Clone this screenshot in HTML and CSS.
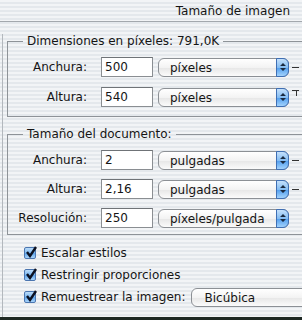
FILE: index.html
```html
<!DOCTYPE html>
<html lang="es">
<head>
  <meta charset="UTF-8">
  <title>Tamaño de imagen</title>
  <link rel="stylesheet" href="styles.css">
</head>
<body>

  <div class="window">
    <div class="titlebar">Tamaño de imagen</div>

    <div class="content">
      <fieldset class="group first">
        <legend>Dimensiones en píxeles: 791,0K</legend>
        <div class="row">
          <label>Anchura:</label>
          <div class="field">500</div>
          <div class="select">píxeles<span class="stepper"><svg width="6" height="10" viewBox="0 0 6 10"><path d="M0 4 L3 1 L6 4 Z M0 6 L3 9 L6 6 Z" fill="#1a2a40"/></svg></span></div>
          <span class="link"></span>
        </div>
        <div class="row">
          <label>Altura:</label>
          <div class="field">540</div>
          <div class="select">píxeles<span class="stepper"><svg width="6" height="10" viewBox="0 0 6 10"><path d="M0 4 L3 1 L6 4 Z M0 6 L3 9 L6 6 Z" fill="#1a2a40"/></svg></span></div>
          <span class="link tee"></span>
        </div>
      </fieldset>

      <fieldset class="group second">
        <legend>Tamaño del documento:</legend>
        <div class="row">
          <label>Anchura:</label>
          <div class="field">2</div>
          <div class="select">pulgadas<span class="stepper"><svg width="6" height="10" viewBox="0 0 6 10"><path d="M0 4 L3 1 L6 4 Z M0 6 L3 9 L6 6 Z" fill="#1a2a40"/></svg></span></div>
          <span class="link"></span>
        </div>
        <div class="row">
          <label>Altura:</label>
          <div class="field">2,16</div>
          <div class="select">pulgadas<span class="stepper"><svg width="6" height="10" viewBox="0 0 6 10"><path d="M0 4 L3 1 L6 4 Z M0 6 L3 9 L6 6 Z" fill="#1a2a40"/></svg></span></div>
          <span class="link"></span>
        </div>
        <div class="row">
          <label>Resolución:</label>
          <div class="field">250</div>
          <div class="select">píxeles/pulgada<span class="stepper"><svg width="6" height="10" viewBox="0 0 6 10"><path d="M0 4 L3 1 L6 4 Z M0 6 L3 9 L6 6 Z" fill="#1a2a40"/></svg></span></div>
        </div>
      </fieldset>

      <div class="checks">
        <div class="check"><span class="box"><svg width="12" height="12" viewBox="0 0 12 12"><path d="M2 6 L5 10 L11 1" stroke="#0b1020" stroke-width="2.4" fill="none"/></svg></span><span>Escalar estilos</span></div>
        <div class="check"><span class="box"><svg width="12" height="12" viewBox="0 0 12 12"><path d="M2 6 L5 10 L11 1" stroke="#0b1020" stroke-width="2.4" fill="none"/></svg></span><span>Restringir proporciones</span></div>
        <div class="check"><span class="box"><svg width="12" height="12" viewBox="0 0 12 12"><path d="M2 6 L5 10 L11 1" stroke="#0b1020" stroke-width="2.4" fill="none"/></svg></span><span>Remuestrear la imagen:</span>
          <div class="select wide">Bicúbica</div>
        </div>
      </div>
    </div>
  </div>

</body>
</html>
```

FILE: styles.css
```css
body {
  margin: 0;
  background-color: #1d2823;
  font-family: "DejaVu Sans", sans-serif;
  font-size: 12px;
  color: #151515;
}

.window {
  width: 302px;
  height: 317px;
  overflow: hidden;
  background: repeating-linear-gradient(to bottom, #f2f4f6 0 2px, #e4e8ec 2px 4px);
}

.titlebar {
  height: 21px;
  line-height: 22px;
  text-align: right;
  padding-right: 12px;
  border-bottom: 1px solid #a3a8ad;
}

.content {
  margin-left: 2px;
  border-left: 1px solid #b3b8bd;
  height: 300px;
}

.group {
  margin: 0 -20px 0 4px;
  padding: 9px 0 9px 0;
  border: 1px solid #8e9398;
  min-width: 0;
}

.group.first {
  margin-top: 12px;
}

.group.second {
  margin-top: 10px;
  padding-bottom: 6px;
}

.group legend {
  margin-left: 15px;
  padding: 0 4px;
  line-height: 14px;
}

.row {
  display: flex;
  align-items: center;
  height: 20px;
  margin-bottom: 9px;
}

.first .row {
  margin-bottom: 10px;
}

.row:last-child {
  margin-bottom: 0;
}

.row label {
  width: 79px;
  text-align: right;
  margin-right: 14px;
}

.field {
  width: 47px;
  height: 18px;
  line-height: 19px;
  padding-left: 3px;
  background: #fff;
  border: 1px solid #8a8e92;
  border-top-color: #6f7377;
  margin-right: 5px;
}

.select {
  position: relative;
  flex-shrink: 0;
  width: 118px;
  height: 17px;
  line-height: 18px;
  padding-left: 11px;
  border: 1px solid #8c9095;
  border-radius: 6px;
  text-align: left;
  background: linear-gradient(to bottom, #ffffff 0%, #f3f3f3 50%, #e6e6e6 51%, #fbfbfb 100%);
}

.stepper {
  position: absolute;
  top: -1px;
  right: -1px;
  width: 13px;
  height: 19px;
  border-radius: 0 6px 6px 0;
  border: 1px solid #3f6fb4;
  box-sizing: border-box;
  background: linear-gradient(to bottom, #c4e0fb 0%, #84bcf2 50%, #4f9ced 51%, #a2d2fc 100%);
  display: flex;
  align-items: center;
  justify-content: center;
}

.link {
  width: 7px;
  height: 1px;
  margin-left: 3px;
  background: #333;
}

.link.tee {
  height: 6px;
  background: linear-gradient(#333, #333) top / 7px 1px no-repeat,
              linear-gradient(#333, #333) 4px 0 / 1px 6px no-repeat;
  margin-top: -8px;
}

.checks {
  margin-top: 7px;
}

.check {
  display: flex;
  align-items: center;
  height: 22px;
  padding-left: 21px;
  white-space: nowrap;
}

.box {
  flex-shrink: 0;
  width: 12px;
  height: 12px;
  margin-right: 5px;
  box-sizing: border-box;
  border: 1px solid #4b76b0;
  border-radius: 2px;
  background: linear-gradient(to bottom, #bcdcf9 0%, #7ab7f0 50%, #5aa2ea 51%, #a9d4fa 100%);
}

.box svg {
  display: block;
  margin: -2px 0 0 0;
}

.select.wide {
  width: 130px;
  margin-left: 5px;
  padding-left: 13px;
}
```
